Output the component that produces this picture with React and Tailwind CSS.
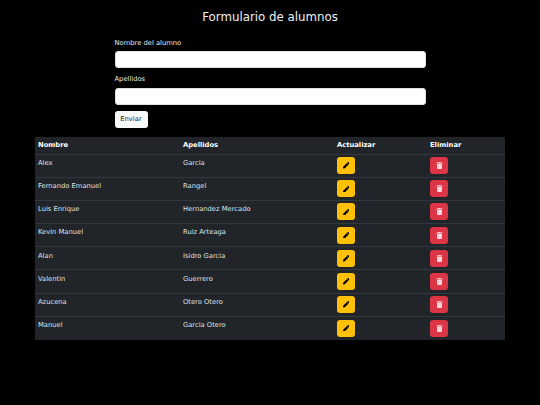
import { FaPen, FaTrash } from "react-icons/fa";

const alumnos = [
  ["Alex", "Garcia"],
  ["Fernando Emanuel", "Rangel"],
  ["Luis Enrique", "Hernandez Mercado"],
  ["Kevin Manuel", "Ruiz Arteaga"],
  ["Alan", "Isidro Garcia"],
  ["Valentin", "Guerrero"],
  ["Azucena", "Otero Otero"],
  ["Manuel", "Garcia Otero"],
];

function Campo({ label }) {
  return (
    <div className="mb-[6px]">
      <label className="mb-[2.5px] block text-[6.75px] leading-[11px] text-[#e9e9e9]">{label}</label>
      <input className="block h-[17px] w-full rounded-[3px] border border-[#dee2e6] bg-white" />
    </div>
  );
}

export default function App() {
  return (
    <div className="min-h-[405px] bg-black font-['DejaVu_Sans',sans-serif] text-white antialiased">
      <h1 className="pt-[8px] text-center text-[11.8px] font-normal leading-[18px] text-[#f2f2f2]">Formulario de alumnos</h1>
      <form className="mx-auto mt-[11.5px] w-[311px]">
        <Campo label="Nombre del alumno" />
        <Campo label="Apellidos" />
        <button type="button" className="block h-[17px] w-[33px] rounded-[3px] bg-[#f8f9fa] text-[6.75px] text-[#212529]">
          Enviar
        </button>
      </form>
      <table className="mx-auto mt-[9.5px] w-[470px] table-fixed border-collapse bg-[#212529] text-[6.75px] text-[#dee2e6]">
        <thead>
          <tr className="h-[17px] border-b border-[#32383e] text-left text-white">
            <th className="w-[145px] px-[3px] font-bold">Nombre</th>
            <th className="w-[154px] px-[3px] font-bold">Apellidos</th>
            <th className="w-[93px] px-[3px] font-bold">Actualizar</th>
            <th className="px-[3px] font-bold">Eliminar</th>
          </tr>
        </thead>
        <tbody>
          {alumnos.map(([nombre, apellidos]) => (
            <tr key={nombre} className="h-[23.2px] border-b border-[#32383e] last:border-0">
              <td className="px-[3px] pb-[5.5px] align-middle">{nombre}</td>
              <td className="px-[3px] pb-[5.5px] align-middle">{apellidos}</td>
              <td className="px-[3px] align-middle">
                <span className="flex h-[17px] w-[18px] items-center justify-center rounded-[3px] bg-[#ffc107] text-black">
                  <FaPen className="h-[6.5px] w-[6.5px]" />
                </span>
              </td>
              <td className="px-[3px] align-middle">
                <span className="flex h-[17px] w-[18px] items-center justify-center rounded-[3px] bg-[#dc3545] text-[#f8d7da]">
                  <FaTrash className="h-[7px] w-[7px]" />
                </span>
              </td>
            </tr>
          ))}
        </tbody>
      </table>
    </div>
  );
}
